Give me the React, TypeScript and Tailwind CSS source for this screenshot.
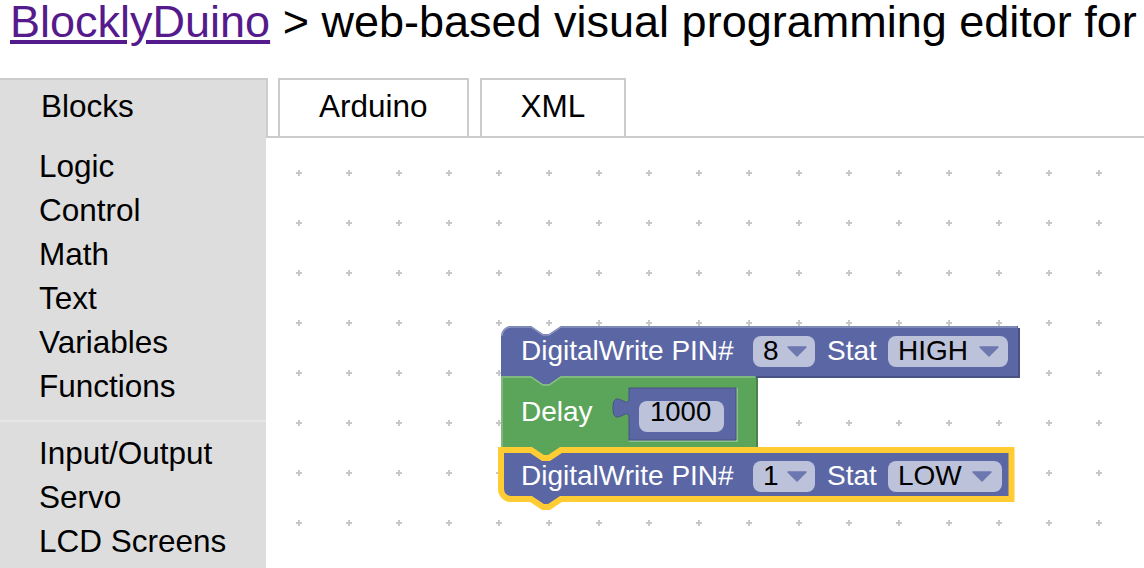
import React from 'react';

const FONT = "'Liberation Sans', Arial, sans-serif";

// Blockly 颜色
const PURPLE = '#5b67a5';
const PURPLE_DARK = '#495284';
const PURPLE_LIGHT = '#8c95c0';
const GREEN = '#5ba55b';
const GREEN_DARK = '#498449';
const GREEN_LIGHT = '#8cc08c';
const FIELD = '#bdc2db';

const categories = ['Logic', 'Control', 'Math', 'Text', 'Variables', 'Functions'];
const hardware = ['Input/Output', 'Servo', 'LCD Screens'];

type DropdownProps = { x: number; y: number; w: number; label: string; arrowX: number };

// 下拉字段
const Dropdown: React.FC<DropdownProps> = ({ x, y, w, label, arrowX }) => (
  <g>
    <rect x={x} y={y} width={w} height={31} rx={8} fill={FIELD} />
    <text x={x + 10} y={y + 24} fontFamily={FONT} fontSize={28} fill="#000">
      {label}
    </text>
    <polygon
      points={`${arrowX},${y + 11} ${arrowX + 18},${y + 11} ${arrowX + 9},${y + 20}`}
      fill="#6d78b0"
      stroke="#6d78b0"
      strokeWidth={1.5}
      strokeLinejoin="round"
    />
  </g>
);

const Label: React.FC<{ x: number; y: number; children: React.ReactNode }> = ({ x, y, children }) => (
  <text x={x} y={y} fontFamily={FONT} fontSize={28} fill="#fff">
    {children}
  </text>
);

// 画布（网格 + 积木）
const Workspace: React.FC = () => {
  const block1 =
    'M 501,336 A 10,10 0 0,1 511,326 H 531 l 12,8 6,0 12,-8 H 1018 V 376 H 561 l -12,8 -6,0 -12,-8 H 501 Z';
  const block2 =
    'M 501,376 H 531 l 12,8 6,0 12,-8 H 756 V 450 H 561 l -12,8 -6,0 -12,-8 H 501 Z';
  const block3 =
    'M 501,450 H 531 l 12,8 6,0 12,-8 H 1011.5 V 499 H 561 l -12,8 -6,0 -12,-8 H 511 A 10,10 0 0,1 501,489 Z';
  const valueBlock =
    'M 629,388 H 736 V 440 H 629 V 418 c 0,-13 -16,11 -16,-10 s 16,3 16,-10 Z';

  return (
    <svg className="absolute inset-0 h-full w-full" width={876} height={430}>
      <g transform="translate(-268,-138)">
        <defs>
          <pattern id="grid" x={274} y={148} width={50} height={50} patternUnits="userSpaceOnUse">
            <path d="M 22 25 H 28 M 25 22 V 28" stroke="#c8c8c8" strokeWidth={2} />
          </pattern>
        </defs>
        <rect x={268} y={138} width={876} height={430} fill="url(#grid)" />

        {/* DigitalWrite PIN# 8 */}
        <path d={block1} fill={PURPLE_DARK} transform="translate(2,2)" />
        <path d={block1} fill={PURPLE} />
        <path
          d="M 502,336 A 9,9 0 0,1 511,327 H 531 l 12,8 6,0 12,-8 H 1017"
          fill="none"
          stroke={PURPLE_LIGHT}
          strokeWidth={1.5}
        />
        <Label x={521} y={360}>DigitalWrite PIN#</Label>
        <Dropdown x={753} y={336} w={62} label="8" arrowX={788} />
        <Label x={827} y={360}>Stat</Label>
        <Dropdown x={888} y={336} w={120} label="HIGH" arrowX={980} />

        {/* Delay */}
        <path d={block2} fill={GREEN_DARK} transform="translate(2,2)" />
        <path d={block2} fill={GREEN} />
        <path
          d="M 502,449 V 377 H 531 l 12,8 6,0 12,-8 H 755"
          fill="none"
          stroke={GREEN_LIGHT}
          strokeWidth={1.5}
        />
        <Label x={521} y={421}>Delay</Label>
        <path d="M 737,388 V 441 H 629" fill="none" stroke={GREEN_LIGHT} strokeWidth={2} />
        <path d={valueBlock} fill={PURPLE} stroke={PURPLE_DARK} strokeWidth={1} />
        <rect x={639} y={401} width={85} height={31} rx={8} fill={FIELD} />
        <text x={650} y={421} fontFamily={FONT} fontSize={27.5} fill="#000">
          1000
        </text>

        {/* DigitalWrite PIN# 1（选中） */}
        <path d={block3} fill={PURPLE} stroke="#ffcc33" strokeWidth={6} />
        <Label x={521} y={485}>DigitalWrite PIN#</Label>
        <Dropdown x={753} y={461} w={62} label="1" arrowX={788} />
        <Label x={827} y={485}>Stat</Label>
        <Dropdown x={888} y={461} w={114} label="LOW" arrowX={973} />
      </g>
    </svg>
  );
};

const App: React.FC = () => {
  return (
    <div className="h-[568px] w-[1144px] overflow-hidden bg-white text-black font-['Liberation_Sans',Arial,sans-serif]">
      {/* 页面标题 */}
      <h1 className="mb-[34px] whitespace-nowrap pl-[10px] text-[45px] font-normal leading-[44px]">
        <a href="#" className="text-[#551a8b] underline">
          BlocklyDuino
        </a>{' '}
        &gt; web-based visual programming editor for arduino
      </h1>

      <div className="flex h-[490px]">
        {/* 左侧分类 */}
        <div className="flex w-[268px] flex-col">
          <div className="h-[60px] border-t-2 border-r-2 border-[#cccccc] bg-[#dddddd] pl-[41px] text-[31.5px] leading-[52px]">
            Blocks
          </div>
          <div className="w-[266px] flex-1 bg-[#dddddd] pt-[6px] text-[31.5px] leading-[44px]">
            {categories.map((name) => (
              <div key={name} className="pl-[39px]">
                {name}
              </div>
            ))}
            <div className="mt-3 mb-[9px] h-[2px] bg-[#e6e6e6]" />
            {hardware.map((name) => (
              <div key={name} className="pl-[39px]">
                {name}
              </div>
            ))}
          </div>
        </div>

        {/* 右侧 Tab + 画布 */}
        <div className="flex flex-1 flex-col">
          <div className="flex h-[60px] items-end gap-[11px] border-b-2 border-[#cccccc] pl-[10px]">
            {['Arduino', 'XML'].map((tab) => (
              <div
                key={tab}
                className="h-[58px] border-2 border-b-0 border-[#cccccc] bg-white px-[39px] text-[31.5px] leading-[52px]"
              >
                {tab}
              </div>
            ))}
          </div>
          <div className="relative flex-1 bg-white">
            <Workspace />
          </div>
        </div>
      </div>
    </div>
  );
};

export default App;
